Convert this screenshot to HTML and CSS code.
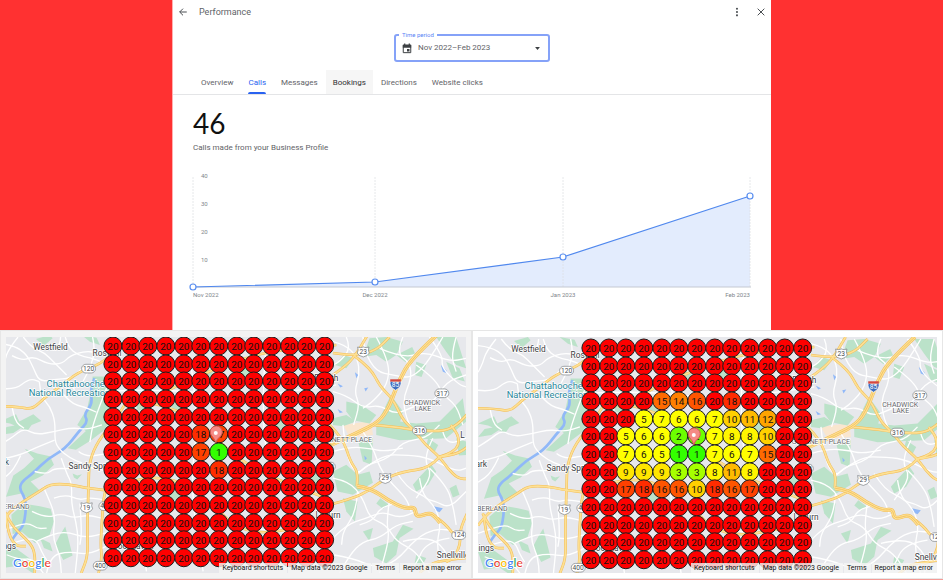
FILE: index.html
```html
<!DOCTYPE html>
<html lang="en">
<head>
<meta charset="utf-8">
<title>Performance</title>
<link rel="stylesheet" href="styles.css">
</head>
<body>
<section class="hero">
  <main class="panel">
    <header class="topbar">
      <button class="icon-button" aria-label="Back">
        <svg viewBox="0 0 24 24"><path d="M21 12H4M12 4l-8 8 8 8"/></svg>
      </button>
      <h1 class="title">Performance</h1>
      <button class="icon-button" aria-label="More options">
        <svg class="solid" viewBox="0 0 24 24"><circle cx="12" cy="4" r="2.5"/><circle cx="12" cy="12" r="2.5"/><circle cx="12" cy="20" r="2.5"/></svg>
      </button>
      <button class="icon-button" aria-label="Close">
        <svg viewBox="0 0 24 24"><path d="M4 4l16 16M20 4L4 20"/></svg>
      </button>
    </header>
    <div class="period">
      <label class="period-label" for="period">Time period</label>
      <svg class="calendar" viewBox="0 0 24 24"><path d="M3 4h18v18H3z" fill="none" stroke="#3c4043" stroke-width="2.4"/><path d="M2 3h20v7H2zM5 0h3v4H5zM16 0h3v4h-3zM12 13h6v6h-6z" fill="#3c4043"/></svg>
      <select id="period" class="period-select"><option>Nov 2022–Feb 2023</option></select>
      <svg class="caret" viewBox="0 0 8 5"><path d="M0 0h8L4 5z" fill="#3c4043"/></svg>
    </div>
    <nav class="tabs">
      <button class="tab">Overview</button>
      <button class="tab active">Calls</button>
      <button class="tab">Messages</button>
      <button class="tab hovered">Bookings</button>
      <button class="tab">Directions</button>
      <button class="tab">Website clicks</button>
    </nav>
    <p class="total">46</p>
    <p class="caption">Calls made from your Business Profile</p>
    <svg class="chart" viewBox="0 0 598 150" role="img" aria-label="Calls per month">
      <path class="area" d="M20 122L202 117L390 92L577 31V122Z"/>
      <path class="guide" d="M20 12V122M202 12V122M390 12V122M577 12V122"/>
      <path class="axis" d="M20 122H578"/>
      <path class="line" d="M20 122L202 117L390 92L577 31"/>
      <g class="dots"><circle cx="20" cy="122" r="3"/><circle cx="202" cy="117" r="3"/><circle cx="390" cy="92" r="3"/><circle cx="577" cy="31" r="3"/></g>
      <g class="ticks">
        <text x="28" y="13">40</text><text x="28" y="41">30</text><text x="28" y="69">20</text><text x="28" y="97">10</text>
        <text x="20" y="132">Nov 2022</text>
        <text x="202" y="132" text-anchor="middle">Dec 2022</text>
        <text x="390" y="132" text-anchor="middle">Jan 2023</text>
        <text x="577" y="132" text-anchor="end">Feb 2023</text>
      </g>
    </svg>
  </main>
</section>
<section class="maps">
  <article class="card muted"><div class="map" data-map="before"></div></article>
  <article class="card"><div class="map" data-map="after"></div></article>
</section>
<script src="maps.js"></script>
</body>
</html>
```
FILE: styles.css
```css
* { box-sizing: border-box; }
body { margin: 0; background: #ff3131; font-family: Roboto, "Liberation Sans", sans-serif; color: #5f6368; }
button { font: inherit; color: inherit; background: none; border: 0; padding: 0; }
h1, p { margin: 0; }

.hero { display: grid; grid-template-columns: 172fr 599fr 172fr; }
.panel { grid-column: 2; background: #fff; border-left: 1px solid #ffb0b0; padding-bottom: 15px; }
.topbar { display: flex; align-items: center; height: 24px; padding: 0 5px; }
.title { flex: 1; padding-left: 11px; font-size: 9px; font-weight: 400; }
.icon-button { display: flex; width: 10px; height: 10px; }
.icon-button + .icon-button { margin-left: 14px; }
.icon-button svg { width: 10px; height: 10px; fill: none; stroke: #4a4e52; stroke-width: 2.4; }
.icon-button .solid { fill: #4a4e52; stroke: none; }

.period { position: relative; display: flex; align-items: center; width: 156px; height: 28px; margin: 10px auto 8px; border: 2px solid #85a2f8; border-radius: 3px; padding: 0 8px 0 6px; }
.period-label { position: absolute; top: -6px; left: 3px; padding: 0 3px; background: #fff; font-size: 6px; line-height: 9px; color: #5b84f5; }
.calendar { width: 10px; height: 11px; }
.period-select { flex: 1; appearance: none; border: 0; outline: 0; background: none; padding: 0 0 0 6px; font: 8px/12px Roboto, sans-serif; color: #5f6368; }
.caret { width: 5px; height: 3px; }

.tabs { display: flex; gap: 1px; height: 25px; padding-left: 21px; border-bottom: 1px solid #e4e5e7; font-size: 8px; }
.tab { position: relative; padding: 0 7px; }
.tab.active { color: #2962f0; }
.tab.active::after { content: ""; position: absolute; left: 7px; right: 7px; bottom: 0; height: 2px; border-radius: 2px 2px 0 0; background: #2962f0; }
.tab.hovered { background: #f6f6f6; color: #303134; }

.total { padding: 11px 20px 0; font: 28px/34px Lato, sans-serif; color: #111; }
.caption { padding: 1px 20px 0; font-size: 8px; line-height: 14px; }

.chart { display: block; width: 100%; margin-top: 10px; }
.area { fill: #e3ecfd; }
.guide { fill: none; stroke: #dcdee1; stroke-dasharray: 2 1; opacity: .7; }
.axis { stroke: #c4c9d2; }
.line { fill: none; stroke: #5088ee; stroke-width: 1.2; }
.dots { fill: #fff; stroke: #5a8ff0; stroke-width: 1.2; }
.ticks { font-size: 6px; fill: #80868b; }

.maps { display: grid; grid-template-columns: 1fr 1fr; border-bottom: 1px solid #f59a96; }
.card { padding: 6px 5px 5px; background: #fff; border: 1px solid #e6e6e6; }
.card.muted { background: #f3f3f3; }
.map { position: relative; overflow: hidden; background: #e7e8ec; }
.map-art { display: block; width: 100%; }
.legal { position: absolute; right: 0; bottom: 0; display: flex; font-size: 7px; line-height: 10px; color: #111; }
.legal a, .legal span { padding: 0 4px 0 3px; margin-left: 1px; background: rgba(245, 245, 245, .8); color: inherit; text-decoration: none; }

.green { fill: #bbe2c9; }
.plaza { fill: #f9e6cf; }
.water { fill: none; stroke: #90b8f8; stroke-width: 8; }
.lake { fill: #90b8f8; }
.road { fill: none; stroke: #fff; stroke-width: 4; stroke-linejoin: round; }
.edge { fill: none; stroke: #f3bd55; stroke-width: 8; }
.main { fill: none; stroke: #fde094; stroke-width: 5; }
.edge.wide { stroke-width: 12; }
.main.wide { stroke-width: 9; }
.median { fill: none; stroke: #efb64c; stroke-width: 2; }
.place { font-size: 25px; fill: #3c4043; stroke: #fff; stroke-width: 4px; paint-order: stroke; }
.area-name { font-size: 21px; fill: #5f6368; stroke: #fff; stroke-width: 4px; paint-order: stroke; }
.park-name { font-size: 28px; fill: #27869a; stroke: #fff; stroke-width: 4px; paint-order: stroke; }
.shield { fill: #fff; stroke: #777b80; stroke-width: 2; }
.shield-text { font-size: 20px; fill: #4a4e52; text-anchor: middle; }
.shield-text.light { fill: #fff; }
.pins circle { stroke: #1c1c1c; stroke-width: 1; }
.pins text { font-size: 10px; fill: #111; text-anchor: middle; }
.logo { font-family: Lato, sans-serif; font-size: 12px; font-weight: 500; stroke: #fff; stroke-width: 2px; paint-order: stroke; }
```
FILE: maps.js
```js
// Polylines are flat lists of x,y pairs, rounded off at their corners.
function smooth(list) {
  const n = list.trim().split(/[ ,]+/).map(Number), p = [];
  for (let i = 0; i < n.length; i += 2) p.push([n[i], n[i + 1]]);
  let d = "M" + p[0];
  for (let i = 1; i < p.length - 1; i++) {
    d += "Q" + p[i] + " " + (p[i][0] + p[i + 1][0]) / 2 + "," + (p[i][1] + p[i + 1][1]) / 2;
  }
  return d + "L" + p[p.length - 1];
}
const paths = (cls, lists) => lists.map(l => `<path class="${cls}" d="${smooth(l)}"/>`).join("");
const shapes = (cls, lists) => lists.map(l => `<polygon class="${cls}" points="${l}"/>`).join("");
const text = (cls, x, y, t, anchor = "start") => `<text class="${cls}" x="${x}" y="${y}" text-anchor="${anchor}">${t}</text>`;
const oval = (x, y, t) => `<rect class="shield" x="${x - 21}" y="${y - 13}" width="42" height="26" rx="13"/>${text("shield-text", x, y + 7, t, "middle")}`;
const crest = (x, y, t) => `<path class="shield" d="M${x - 17} ${y - 14}q8 4 17 0q9 4 17 0q-4 9 1 18q-2 8 -18 12q-16 -4 -18 -12q5 -9 1 -18z"/>${text("shield-text", x, y + 7, t, "middle")}`;

const west = {
  green: [
    "278,155 312,155 345,190 345,270 310,318 270,348 228,375 203,370 258,318 232,300 262,250 275,190",
    "0,290 48,268 58,290 100,268 124,288 95,300 82,318 62,310 40,324 0,330 20,306 44,302 30,296",
    "74,372 112,386 150,394 162,420 128,452 92,470 122,500 88,524 64,506 18,516 40,452 72,430 102,402",
    "82,538 120,544 152,552 162,590 148,634 105,655 66,622 38,628 34,570 60,548",
    "165,660 182,628 196,605 218,692 190,706", "0,675 44,668 74,690 110,716 98,745 64,722 18,728",
    "108,42 150,30 158,40 132,62", "218,446 232,452 246,448 232,464 222,458", "120,640 150,655 158,680 132,670",
    "420,210 450,220 440,265 405,250", "520,220 560,240 545,265 515,255", "620,130 650,150 640,180 615,160", "500,480 560,500 540,530 505,520",
    "245,30 290,38 300,60 270,50", "720,100 760,120 750,160 715,150", "820,260 860,280 850,320 815,300", "930,440 970,450 960,500 925,480"
  ],
  water: ["284,160 270,195 278,236 252,268 264,290 238,318 196,372 142,402 98,446 66,470 58,492 76,520 78,560 70,604 52,622 34,648"],
  road: [
    "0,56 40,60 80,88 100,128 118,170 160,164 214,160 248,130", "70,36 92,66 134,84 160,110 200,150", "36,92 66,108 100,94 146,118 188,116 210,92 256,78 300,84 340,66",
    "196,36 204,66 236,92 270,98 308,112", "118,170 122,214 150,244 166,290 164,346 176,372 210,400 246,414", "0,190 44,196 88,160 118,170",
    "0,360 36,338 70,310 110,330 160,320 216,308 264,314 306,300", "36,245 44,290 72,310", "180,196 212,236 254,246 290,262", "0,404 60,392 112,366 164,346",
    "104,440 140,450 162,430 214,432 266,426 318,438", "130,486 150,530 166,576 158,640 180,690 184,745", "184,400 200,446 216,476 214,536 228,590 236,650 226,745",
    "96,560 136,580 184,566 222,580 264,570 320,584", "162,520 196,508 238,526 266,518 320,526", "110,650 150,630 200,620 258,640 318,624", "140,745 150,694 206,680 266,690 320,664",
    "0,620 46,604 86,594 112,612 140,610", "24,660 80,640 112,648 124,680 140,706", "278,36 286,70 274,122 250,168", "320,190 280,290 270,352", "236,380 256,396 312,388",
    "182,36 180,60 164,76", "54,36 24,74 14,110 0,136", "224,194 200,160", "240,536 246,620 240,660", "62,392 40,440 0,466", "20,690 60,706 96,700 130,745",
    "310,200 500,190 720,220 1010,180", "380,40 420,240 390,450 440,740", "560,40 600,260 570,480 610,740", "800,40 780,300 830,500 800,740", "320,610 600,590 1000,640"
  ],
  minor: ["0,244 54,245 96,254 132,220 176,188 234,142 300,118 344,80", "0,596 28,560 70,530 118,500 150,478 208,478 250,488 330,498",
    "14,560 34,600 66,632 98,664 106,700 104,745", "18,566 22,620 46,664 78,664", "390,215 346,286 294,348 268,410 266,480 264,540 262,620 264,694 244,745",
    "330,460 312,500 306,590 302,660 306,700 296,745", "330,498 400,460 520,458 620,520 740,640 980,590", "420,240 700,90 1010,60", "360,220 560,240 720,420 980,520"],
  labels: text("place", 100, 74, "Westfield") + text("place", 278, 92, "Roswell") + text("place", 206, 432, "Sandy Springs") +
    text("place", 27, 419, "Park", "end") + text("place", 48, 673, "Vinings", "end") + text("area-name", 89, 554, "CUMBERLAND", "end") +
    text("place", 330, 672, "Brookhaven") + text("park-name", 140, 185, "Chattahoochee") + text("park-name", 86, 214, "National Recreation") +
    oval(266, 131, "120") + crest(260, 548, "19") + oval(318, 544, "400") + oval(301, 723, "400")
};

const east = {
  green: [
    "420,40 470,36 520,50 500,90 470,110 440,90 400,96", "500,90 548,66 556,84 528,112", "620,36 680,36 696,86 710,130 680,120 650,80",
    "650,110 690,130 706,170 670,160", "350,230 396,240 440,270 420,296 370,286 350,260", "440,300 484,210 520,260 512,290 560,296 630,290 700,220 710,290 650,340 510,346 440,330",
    "310,280 350,270 380,290 340,304 310,300", "386,350 430,340 426,420 400,410", "310,440 350,420 384,450 420,440 430,474 370,510 324,500",
    "340,520 384,530 376,590 350,560", "452,520 478,540 460,552 440,536", "574,452 606,420 620,440 596,480 560,500 550,480", "680,340 710,350 710,390 688,392",
    "430,670 490,650 520,600 552,612 510,640 500,690 470,716 434,696", "560,110 590,120 576,156 556,150", "560,690 590,700 574,730 554,722", "400,620 430,610 420,650",
    "660,490 680,480 690,510 670,518", "342,90 372,100 350,130 316,120", "596,340 626,360 616,380 590,362"
  ],
  lake: ["634,120 650,136 654,146 640,140", "376,142 386,150 380,160", "324,176 340,184 332,188", "324,252 340,262 330,264", "612,544 640,550 630,562 616,556", "404,190 416,188 408,200", "404,392 412,400 406,406", "620,220 632,228 626,238"],
  road: [
    "310,50 350,60 384,100 390,150 374,200 390,240 372,300", "310,200 350,210 400,250 450,240 500,270 560,240 610,236 650,170 710,150", "400,36 404,80 440,140 490,150 540,160 580,130 620,70 640,36",
    "520,36 500,84 540,112 546,160 520,220 530,280 550,316", "560,120 616,160 640,210 680,240 700,300", "600,36 640,90 636,130 690,180 710,186", "450,70 520,100 590,80 660,110 710,100",
    "340,300 350,400 384,450 410,420 480,400 520,350 590,340 630,300", "380,450 450,390 540,390 600,400 680,440 710,430", "310,380 360,366 420,370 460,380 520,370", "400,320 430,366 450,430 490,480 530,520 545,560",
    "310,460 360,470 400,520 420,580 470,600 500,650 560,680 600,745", "310,640 350,600 410,580 460,560 510,580 560,560", "330,745 360,690 400,650 450,640 500,600 550,590", "310,690 370,700 440,730 500,710 560,640 620,610 680,620",
    "480,525 470,590 480,640 450,745", "570,460 580,520 620,530 660,550 710,500", "600,430 650,480 670,540 680,600", "500,440 530,490 600,520 636,590 620,660 640,745", "610,340 580,400 610,450 560,520",
    "390,600 430,590 450,550 500,535", "384,500 380,560 340,620 336,660", "660,640 590,650 560,720 530,745", "640,320 650,360 710,340", "440,36 480,110 474,180 430,230 400,250", "350,36 364,70 330,110 310,120", "680,36 664,90 680,140", "520,650 600,630 660,690 650,745"
  ],
  minor: ["310,84 376,94 440,76 480,36", "310,150 344,126 376,94 414,30", "376,94 424,130 450,184 490,222 520,286 556,318 584,356 630,396 654,430 686,462 720,462",
    "430,300 500,306 560,316 640,320 684,300 720,260", "630,396 600,430 520,440 460,464 414,500 370,520 300,540", "630,396 678,382 692,340 664,300", "630,396 680,390 720,362",
    "300,300 340,340 362,410 384,440 382,484", "720,552 690,610 694,656 674,700 650,712", "570,745 600,716 650,706 720,698", "624,580 650,600 668,626 690,632"],
  wide: ["622,30 546,100 506,170 480,244 448,292 380,326 300,362", "382,484 424,490 476,528 528,552 556,546 560,578 600,564 616,574 632,594"],
  labels: text("place", 326, 168, "Duluth", "end") + text("place", 333, 581, "Lilburn", "end") + text("place", 622, 700, "Snellville") + text("place", 692, 338, "L") +
    text("area-name", 578, 239, "CHADWICK", "middle") + text("area-name", 580, 257, "LAKE", "middle") + text("area-name", 427, 351, "GWINNETT PLACE", "end") +
    crest(401, 80, "23") + oval(637, 205, "317") + oval(570, 317, "316") + crest(467, 460, "29") + oval(688, 631, "124") + oval(296, 425, "378") +
    `<path d="M482 168q16 6 32 0q4 18 -16 28q-20 -10 -16 -28z" fill="#3f6fc0" stroke="#fff" stroke-width="2"/><path d="M482 163h32v7h-32z" fill="#d5483f"/>${text("shield-text light", 498, 187, "85", "middle")}`
};

function terrain(t) {
  const wide = t.wide || [];
  return shapes("green", t.green) + shapes("lake", t.lake || []) + paths("water", t.water || []) + paths("road", t.road) +
    paths("edge", t.minor) + paths("main", t.minor) + paths("edge wide", wide) + paths("main wide", wide) + paths("median", wide);
}

const colors = { 1: "#33ff00", 2: "#6cff00", 3: "#a6ff00", 5: "#ffff00", 6: "#ffff00", 7: "#ffff00", 8: "#fff500", 9: "#ffe600", 10: "#ffd000", 11: "#ffba00", 12: "#ffa400", 14: "#ff8000", 15: "#ff6a00", 16: "#ff5500", 17: "#ff4000", 18: "#ff2c00", 20: "#ff0000" };
const ranks = {
  before: { 5: [5, 18, 17], 6: [5, 17, 1], 7: [6, 18] },
  after: {
    3: [4, 15, 14, 16, 20, 18], 4: [3, 5, 7, 6, 6, 7, 10, 11, 12], 5: [2, 5, 6, 6, 2, 2, 7, 8, 8, 10], 6: [2, 7, 6, 5, 1, 1, 7, 6, 7, 15],
    7: [2, 9, 9, 9, 3, 3, 8, 11, 8], 8: [2, 17, 18, 16, 16, 10, 18, 16, 17]
  }
};

function pins(rows) {
  let out = "";
  for (let r = 0; r < 13; r++) {
    for (let c = 0; c < 13; c++) {
      const row = rows[r];
      const rank = (row && c >= row[0] && row[c - row[0] + 1]) || 20;
      const x = 107 + Math.round(c * 53 / 3), y = 9 + Math.round(r * 53 / 3);
      out += `<circle cx="${x}" cy="${y}" r="9" fill="${colors[rank]}"/><text x="${x}" y="${y + 4}">${rank}</text>`;
    }
  }
  return out;
}

const logo = [["G", "#4285f4"], ["o", "#ea4335"], ["o", "#fbbc04"], ["g", "#4285f4"], ["l", "#34a853"], ["e", "#ea4335"]]
  .map(([l, c]) => `<tspan fill="${c}">${l}</tspan>`).join("");

document.querySelectorAll(".map").forEach(el => {
  const kind = el.dataset.map;
  const shift = kind === "after" ? "translate(6 2)" : "translate(0 0)";
  const w = `transform="translate(-6 -12) scale(.33333)"`, e = `transform="translate(224 -12) scale(.33333)"`;
  el.innerHTML = `<svg class="map-art" viewBox="0 0 460 236">
    <g transform="${shift}"><g ${w}>${terrain(west)}</g>
    <g ${e}><polygon class="plaza" points="340,300 425,288 430,330 360,336"/>${terrain(east)}</g>
    <g ${w}>${west.labels}</g><g ${e}>${east.labels}</g>
    <g class="pins">${pins(ranks[kind])}</g>
    <path d="M210 106q-1 -4 -4 -7a6 6 0 1 1 9 0q-4 3 -5 7z" fill="#f58a85" stroke="#cf5550"/><circle cx="210" cy="96" r="2" fill="#fff"/></g>
    <text class="logo" x="7" y="230">${logo}</text></svg>
    <div class="legal"><span>Keyboard shortcuts</span><span>Map data ©2023 Google</span><a href="#terms">Terms</a><a href="#report">Report a map error</a></div>`;
});
```
